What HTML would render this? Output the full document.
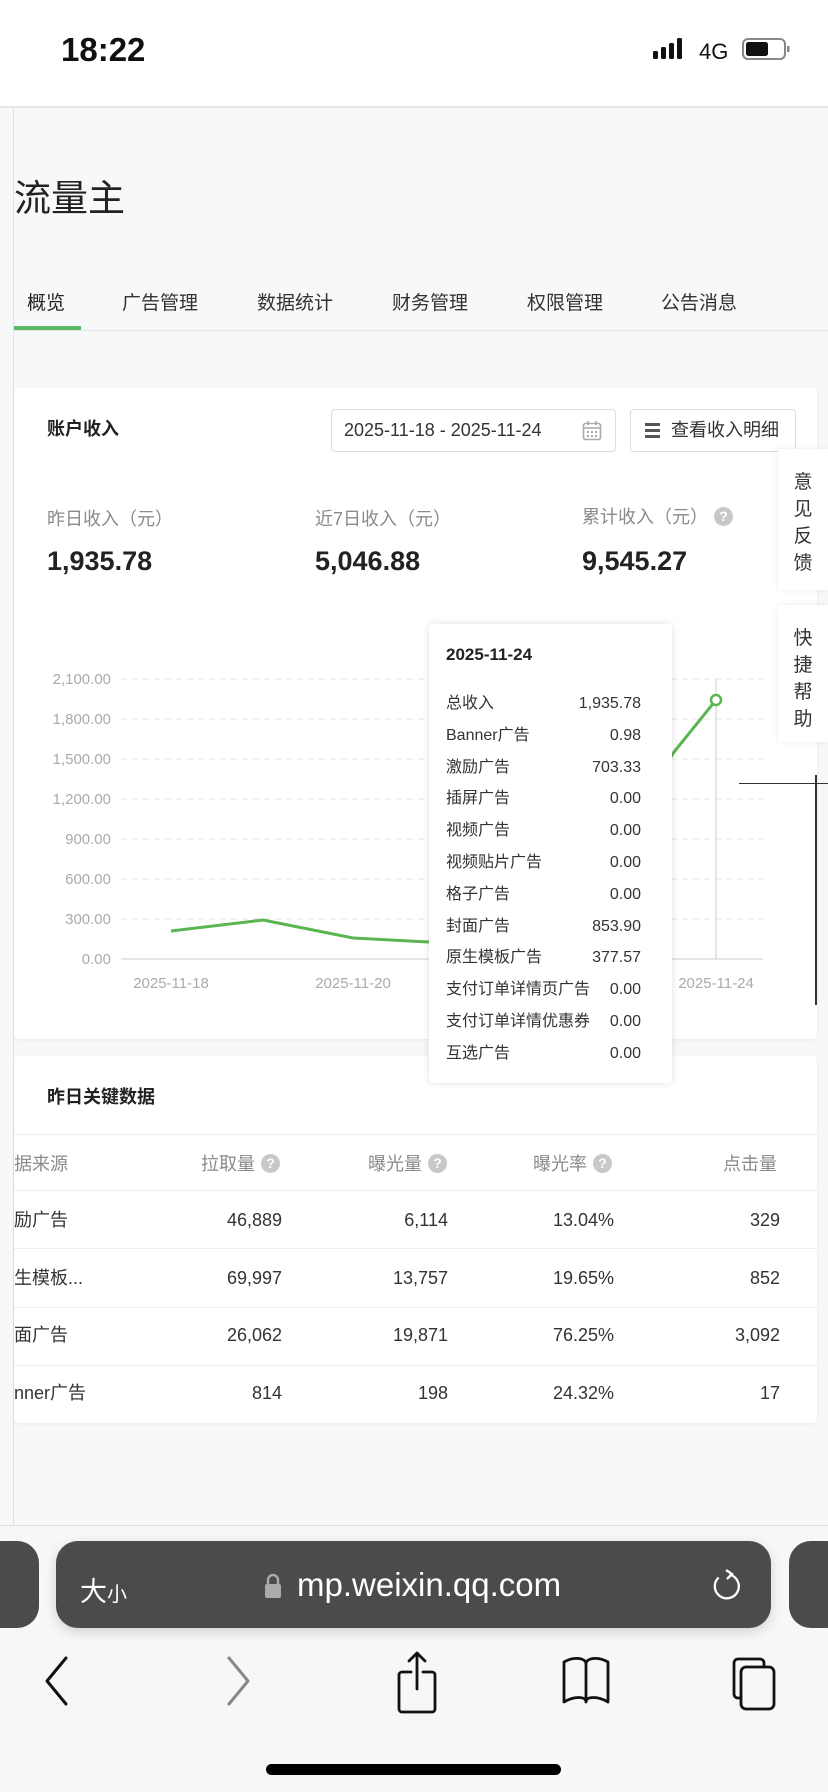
<!DOCTYPE html>
<html><head><meta charset="utf-8"><style>
*{margin:0;padding:0;box-sizing:border-box}
body{width:828px;height:1792px;overflow:hidden;background:#f7f8fa;font-family:"Liberation Sans","Noto Sans CJK SC",sans-serif;position:relative;color:#222}
.a{position:absolute;white-space:nowrap}
.card{position:absolute;background:#fff;border-radius:4px;box-shadow:0 1px 3px rgba(0,0,0,.06)}
.lbl{font-size:18px;color:#8a8a8a}
.val{font-size:27px;font-weight:bold;color:#222}
.tt{font-size:16px;color:#333}
.th{font-size:18px;color:#8a8a8a;top:1152px;line-height:24px}
.td{font-size:18px;color:#333;line-height:24px}
.q{display:inline-block;width:19px;height:19px;border-radius:50%;background:#c8c8c8;color:#fff;font-size:14px;text-align:center;line-height:19px;font-weight:bold;vertical-align:2px;margin-left:6px}
.side{position:absolute;left:778px;width:50px;background:#fff;box-shadow:0 0 6px rgba(0,0,0,.08);font-size:19px;color:#333;text-align:center;line-height:27px;padding-top:20px}
</style></head><body>
<div class="a" style="left:0;top:0;width:828px;height:108px;background:#fff;border-bottom:2px solid #e6e6e6"></div>
<div class="a" style="left:61px;top:31px;font-size:33px;font-weight:bold;color:#111">18:22</div>
<svg class="a" style="left:652px;top:36px" width="140" height="28" viewBox="0 0 140 28">
<rect x="1" y="15" width="5" height="8" rx="1.5" fill="#111"/><rect x="9" y="11" width="5" height="12" rx="1.5" fill="#111"/><rect x="17" y="7" width="5" height="16" rx="1.5" fill="#111"/><rect x="25" y="2" width="5" height="21" rx="1.5" fill="#111"/>
<text x="47" y="23" font-size="22" font-family="Liberation Sans" fill="#111">4G</text>
<rect x="91" y="3" width="42" height="20" rx="5" fill="none" stroke="#888" stroke-width="2"/><rect x="94" y="6" width="22" height="14" rx="2.5" fill="#111"/><rect x="135" y="10" width="2.5" height="6" fill="#888"/></svg>
<div class="a" style="left:13px;top:108px;width:1px;height:1417px;background:#e2e2e2"></div>
<div class="a" style="left:14px;top:168px;font-size:37px;color:#222">流量主</div>
<div class="a" style="left:27px;top:288px;font-size:19px;color:#222">概览</div>
<div class="a" style="left:122px;top:288px;font-size:19px;color:#333">广告管理</div>
<div class="a" style="left:257px;top:288px;font-size:19px;color:#333">数据统计</div>
<div class="a" style="left:392px;top:288px;font-size:19px;color:#333">财务管理</div>
<div class="a" style="left:527px;top:288px;font-size:19px;color:#333">权限管理</div>
<div class="a" style="left:661px;top:288px;font-size:19px;color:#333">公告消息</div>
<div class="a" style="left:14px;top:330px;width:814px;height:1px;background:#e4e4e4"></div>
<div class="a" style="left:14px;top:326px;width:67px;height:4px;background:#5ab867"></div>

<div class="card" style="left:14px;top:388px;width:803px;height:651px"></div>
<div class="a" style="left:47px;top:415px;font-size:18px;font-weight:bold">账户收入</div>
<div class="a" style="left:331px;top:409px;width:285px;height:43px;border:1px solid #ddd;border-radius:4px;font-size:18px;line-height:41px;color:#333;padding:0 0 0 12px">2025-11-18 - 2025-11-24</div>
<svg class="a" style="left:582px;top:420px" width="20" height="21"><rect x="1.5" y="3.5" width="17" height="16" rx="2" fill="none" stroke="#aaa" stroke-width="1.6"/><line x1="2" y1="8" x2="18" y2="8" stroke="#aaa" stroke-width="1.6"/><line x1="6" y1="1" x2="6" y2="5" stroke="#aaa" stroke-width="1.6"/><line x1="14" y1="1" x2="14" y2="5" stroke="#aaa" stroke-width="1.6"/><g fill="#aaa"><rect x="5" y="11" width="2" height="2"/><rect x="9" y="11" width="2" height="2"/><rect x="13" y="11" width="2" height="2"/><rect x="5" y="15" width="2" height="2"/><rect x="9" y="15" width="2" height="2"/><rect x="13" y="15" width="2" height="2"/></g></svg>
<div class="a" style="left:630px;top:409px;width:166px;height:43px;border:1px solid #ddd;border-radius:4px;font-size:18px;line-height:41px;color:#333;padding:0 0 0 40px">查看收入明细</div>
<div class="a" style="left:645px;top:423px;width:15px;height:3px;background:#555;box-shadow:0 6px 0 #555,0 12px 0 #555"></div>
<div class="a lbl" style="left:47px;top:505px">昨日收入（元）</div>
<div class="a lbl" style="left:315px;top:505px">近7日收入（元）</div>
<div class="a lbl" style="left:582px;top:503px">累计收入（元）<span class="q">?</span></div>
<div class="a val" style="left:47px;top:546px">1,935.78</div>
<div class="a val" style="left:315px;top:546px">5,046.88</div>
<div class="a val" style="left:582px;top:546px">9,545.27</div>

<svg class="a" style="left:0;top:0" width="828" height="1040">
<g stroke="#e3e3e3" stroke-dasharray="6 5" stroke-width="1">
<line x1="121" y1="679" x2="763" y2="679"/><line x1="121" y1="719" x2="763" y2="719"/><line x1="121" y1="759" x2="763" y2="759"/><line x1="121" y1="799" x2="763" y2="799"/><line x1="121" y1="839" x2="763" y2="839"/><line x1="121" y1="879" x2="763" y2="879"/><line x1="121" y1="919" x2="763" y2="919"/></g>
<line x1="121" y1="959" x2="763" y2="959" stroke="#ddd" stroke-width="1.5"/>
<line x1="716" y1="679" x2="716" y2="959" stroke="#ccc" stroke-width="1"/>
<g font-size="15" fill="#aaa" font-family="Liberation Sans" text-anchor="end">
<text x="111" y="684">2,100.00</text><text x="111" y="724">1,800.00</text><text x="111" y="764">1,500.00</text><text x="111" y="804">1,200.00</text><text x="111" y="844">900.00</text><text x="111" y="884">600.00</text><text x="111" y="924">300.00</text><text x="111" y="964">0.00</text></g>
<g font-size="15" fill="#aaa" font-family="Liberation Sans" text-anchor="middle"><text x="171" y="988">2025-11-18</text><text x="353" y="988">2025-11-20</text><text x="716" y="988">2025-11-24</text></g>
<polyline points="171,931 263,920 353,938 428,942 535,900 626,830 674,752 716,700" fill="none" stroke="#5ab552" stroke-width="3"/>
<circle cx="716" cy="700" r="5" fill="#fff" stroke="#5ab552" stroke-width="2.5"/>
</svg>

<div class="card" style="left:14px;top:1056px;width:803px;height:367px"></div>
<div class="a" style="left:47px;top:1083px;font-size:18px;font-weight:bold">昨日关键数据</div>
<div class="a" style="left:14px;top:1134px;width:803px;height:1px;background:#eee"></div>
<div class="a" style="left:14px;top:1190px;width:803px;height:1px;background:#eee"></div>
<div class="a" style="left:14px;top:1248px;width:803px;height:1px;background:#eee"></div>
<div class="a" style="left:14px;top:1307px;width:803px;height:1px;background:#eee"></div>
<div class="a" style="left:14px;top:1365px;width:803px;height:1px;background:#eee"></div>
<div class="a th" style="left:14px">据来源</div>
<div class="a th" style="right:548px">拉取量<span class="q">?</span></div>
<div class="a th" style="right:381px">曝光量<span class="q">?</span></div>
<div class="a th" style="right:216px">曝光率<span class="q">?</span></div>
<div class="a th" style="right:51px">点击量</div>
<div class="a td" style="left:14px;top:1208px">励广告</div>
<div class="a td" style="left:14px;top:1266px">生模板...</div>
<div class="a td" style="left:14px;top:1323px">面广告</div>
<div class="a td" style="left:14px;top:1381px">nner广告</div>
<div class="a td" style="right:546px;top:1208px">46,889</div><div class="a td" style="right:380px;top:1208px">6,114</div><div class="a td" style="right:214px;top:1208px">13.04%</div><div class="a td" style="right:48px;top:1208px">329</div>
<div class="a td" style="right:546px;top:1266px">69,997</div><div class="a td" style="right:380px;top:1266px">13,757</div><div class="a td" style="right:214px;top:1266px">19.65%</div><div class="a td" style="right:48px;top:1266px">852</div>
<div class="a td" style="right:546px;top:1323px">26,062</div><div class="a td" style="right:380px;top:1323px">19,871</div><div class="a td" style="right:214px;top:1323px">76.25%</div><div class="a td" style="right:48px;top:1323px">3,092</div>
<div class="a td" style="right:546px;top:1381px">814</div><div class="a td" style="right:380px;top:1381px">198</div><div class="a td" style="right:214px;top:1381px">24.32%</div><div class="a td" style="right:48px;top:1381px">17</div>

<div class="a" style="left:429px;top:624px;width:243px;height:459px;background:#fff;border-radius:4px;box-shadow:0 0 8px rgba(0,0,0,.12)"></div>
<div class="a" style="left:446px;top:645px;font-size:17px;font-weight:bold;color:#222">2025-11-24</div>
<div class="a tt" style="left:446px;top:688px;line-height:31.8px">总收入<br>Banner广告<br>激励广告<br>插屏广告<br>视频广告<br>视频贴片广告<br>格子广告<br>封面广告<br>原生模板广告<br>支付订单详情页广告<br>支付订单详情优惠券<br>互选广告</div>
<div class="a tt" style="right:187px;top:688px;line-height:31.8px;text-align:right">1,935.78<br>0.98<br>703.33<br>0.00<br>0.00<br>0.00<br>0.00<br>853.90<br>377.57<br>0.00<br>0.00<br>0.00</div>

<div class="side" style="top:449px;height:141px">意<br>见<br>反<br>馈</div>
<div class="side" style="top:605px;height:137px">快<br>捷<br>帮<br>助</div>
<div class="a" style="left:739px;top:783px;width:89px;height:1px;background:#333"></div>
<div class="a" style="left:815px;top:775px;width:2px;height:230px;background:#333"></div>

<div class="a" style="left:0;top:1525px;width:828px;height:267px;background:#f7f7f7;border-top:1px solid #ddd"></div>
<div class="a" style="left:-20px;top:1541px;width:59px;height:87px;border-radius:22px;background:#4b4b4d"></div>
<div class="a" style="left:789px;top:1541px;width:60px;height:87px;border-radius:22px;background:#4b4b4d"></div>
<div class="a" style="left:56px;top:1541px;width:715px;height:87px;border-radius:22px;background:#4b4b4d;box-shadow:0 4px 12px rgba(0,0,0,.15)"></div>
<div class="a" style="left:80px;top:1570px;font-size:27px;color:#fff">大<span style="font-size:20px">小</span></div>
<svg class="a" style="left:263px;top:1572px" width="20" height="27"><path d="M5 12V8a5 5 0 0 1 10 0v4" fill="none" stroke="#aaa" stroke-width="2.5"/><rect x="2" y="12" width="16" height="14" rx="2" fill="#aaa"/></svg>
<div class="a" style="left:297px;top:1566px;font-size:33px;color:#fff">mp.weixin.qq.com</div>
<svg class="a" style="left:711px;top:1567px" width="34" height="38"><path d="M20 8 A12 12 0 1 0 28 16" fill="none" stroke="#fff" stroke-width="2.3" transform="rotate(-60 16 20)"/><path d="M15 3 L21 7 L16 12" fill="none" stroke="#fff" stroke-width="2.3"/></svg>
<svg class="a" style="left:40px;top:1650px" width="760" height="70" fill="none" stroke-linecap="round" stroke-linejoin="round">
<path d="M26 8 L7 31 L26 54" stroke="#111" stroke-width="3"/>
<path d="M189 8 L208 31 L189 54" stroke="#888" stroke-width="3"/>
<path d="M371 22 H362 a3 3 0 0 0 -3 3 V59 a3 3 0 0 0 3 3 H392 a3 3 0 0 0 3 -3 V25 a3 3 0 0 0 -3 -3 H383 M377 39 V3 M369 11 L377 3 L385 11" stroke="#111" stroke-width="2.8"/>
<path d="M524 52 C534 46 546 46 546 52 V14 C546 8 534 6 524 12 Z M546 52 C546 46 558 46 568 52 V12 C558 6 546 8 546 14" stroke="#111" stroke-width="2.8"/>
<rect x="701" y="17" width="33" height="42" rx="5" stroke="#111" stroke-width="2.8"/>
<path d="M701 48 h-3 a4 4 0 0 1 -4 -4 V13 a4 4 0 0 1 4 -4 H720 a4 4 0 0 1 4 4 v4" stroke="#111" stroke-width="2.8"/>
</svg>
<div class="a" style="left:266px;top:1764px;width:295px;height:11px;border-radius:6px;background:#000"></div>
</body></html>
